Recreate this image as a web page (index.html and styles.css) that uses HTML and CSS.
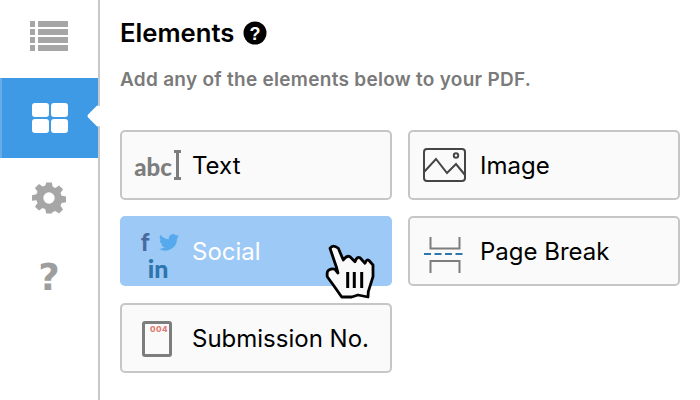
FILE: index.html
```html
<!DOCTYPE html>
<html lang="en">
<head>
<meta charset="UTF-8">
<title>Elements</title>
<link rel="stylesheet" href="styles.css">
</head>
<body>
<div class="app">
    <nav class="sidebar">
        <div class="nav-item nav-first">
            <svg width="38" height="30" viewBox="0 0 38 30" fill="#a6a6a6">
                <rect x="0" y="0" width="5" height="6"/><rect x="8" y="0" width="30" height="6"/>
                <rect x="0" y="8" width="5" height="6"/><rect x="8" y="8" width="30" height="6"/>
                <rect x="0" y="16" width="5" height="6"/><rect x="8" y="16" width="30" height="6"/>
                <rect x="0" y="24" width="5" height="6"/><rect x="8" y="24" width="30" height="6"/>
            </svg>
        </div>
        <div class="nav-item active">
            <svg width="36" height="30" viewBox="0 0 36 30" fill="#fff">
                <rect x="0" y="0" width="17" height="14" rx="3"/><rect x="19" y="0" width="17" height="14" rx="3"/>
                <rect x="0" y="16" width="17" height="14" rx="3"/><rect x="19" y="16" width="17" height="14" rx="3"/>
            </svg>
        </div>
        <div class="nav-item">
            <svg width="34" height="34" viewBox="0 0 24 24" fill="#a6a6a6">
                <path fill-rule="evenodd" d="M10 1h4l.6 3.1 1.9.8 2.6-1.8 2.8 2.8-1.8 2.6.8 1.9 3.1.6v4l-3.1.6-.8 1.9 1.8 2.6-2.8 2.8-2.6-1.8-1.9.8L14 23h-4l-.6-3.1-1.9-.8-2.6 1.8-2.8-2.8 1.8-2.6-.8-1.9L0 14v-4l3.1-.6.8-1.9L2.1 4.9l2.8-2.8 2.6 1.8 1.9-.8zM12 8a4 4 0 1 0 0 8 4 4 0 0 0 0-8z"/>
            </svg>
        </div>
        <div class="nav-item">
            <span class="nav-help">?</span>
        </div>
    </nav>

    <main class="content">
        <h1 class="title">Elements
            <svg class="title-help" width="24" height="24" viewBox="0 0 24 24">
                <circle cx="12" cy="12" r="11.5" fill="#000"/>
                <text x="12" y="18.5" text-anchor="middle" class="title-help-mark">?</text>
            </svg>
        </h1>
        <p class="subtitle">Add any of the elements below to your PDF.</p>

        <div class="grid">
            <div class="card">
                <div class="card-icon icon-text">
                    <span class="abc">abc</span>
                    <svg width="9" height="30" viewBox="0 0 9 30" fill="none" stroke="#7d7d7d" stroke-width="3">
                        <path d="M1 1.500h7M4.500 1.500v27M1 28.500h7"/>
                    </svg>
                </div>
                <span class="card-label">Text</span>
            </div>
            <div class="card">
                <div class="card-icon">
                    <svg width="44" height="34" viewBox="0 0 44 34" fill="none" stroke="#454545" stroke-width="2">
                        <rect x="1" y="1" width="41" height="32" rx="3"/>
                        <circle cx="33" cy="7.500" r="2.200"/>
                        <path d="M1 24L13 11 24 25 33 16 42 27"/>
                    </svg>
                </div>
                <span class="card-label">Image</span>
            </div>
            <div class="card card-hover">
                <div class="card-icon social">
                    <span class="fb">f</span>
                    <svg class="bird" width="20" height="17" viewBox="0 0 24 20" fill="#55a9ec">
                        <path d="M24 2.4a10 10 0 0 1-2.8.8 5 5 0 0 0 2.200-2.700 10 10 0 0 1-3.100 1.200 4.900 4.900 0 0 0-8.400 4.500A14 14 0 0 1 1.700 1a4.900 4.900 0 0 0 1.500 6.600 4.900 4.900 0 0 1-2.200-.6 4.900 4.900 0 0 0 3.900 4.900 4.900 4.900 0 0 1-2.200.1 4.900 4.900 0 0 0 4.600 3.400A9.900 9.900 0 0 1 0 17.400 14 14 0 0 0 21.600 5a10 10 0 0 0 2.400-2.600z"/>
                    </svg>
                    <span class="in">in</span>
                </div>
                <span class="card-label">Social</span>
            </div>
            <div class="card">
                <div class="card-icon">
                    <svg class="break-icon" width="42" height="36" viewBox="0 0 42 36" fill="none" stroke="#7d7d7d" stroke-width="2">
                        <path d="M6.500 0V11.500H35.500V0"/>
                        <path d="M6.500 36V24H35.500V36"/>
                        <path d="M0 17h42" stroke="#2e77ad" stroke-dasharray="7 3.500"/>
                    </svg>
                </div>
                <span class="card-label">Page Break</span>
            </div>
            <div class="card">
                <div class="card-icon">
                    <div class="sheet"><span class="sheet-no">004</span></div>
                </div>
                <span class="card-label">Submission No.</span>
            </div>
        </div>
    </main>
</div>

<svg class="hand" width="50" height="56" viewBox="0 0 50 56">
    <path d="M5 5.300Q8 .8 13.300 5.300L18.300 17Q22 12 25 13.700L30 18.700Q32 13 35 14.700L40 20.300Q42 15.500 44 17.500L48 22V33.700L43.300 48.700 43 54 33 52 26.700 54H16.700L8.300 42 2.300 33.700Q1.500 28 4 27 7 25 10 26.300L13 30 11.700 25z" fill="#f9f9f9" stroke="#000" stroke-width="2.800" stroke-linejoin="round"/>
    <path d="M22.700 29v16M29.300 29v16M36.700 29v16" stroke="#000" stroke-width="3" fill="none"/>
</svg>
</body>
</html>
```

FILE: styles.css
```css
body {
    margin: 0;
    background-color: #fff;
    font-family: "Inter", sans-serif;
    color: #000;
    overflow: hidden;
}

.app {
    display: flex;
    height: 400px;
}

/* barra lateral */
.sidebar {
    width: 98px;
    border-right: 2px solid #c8c8c8;
    flex-shrink: 0;
}

.nav-item {
    position: relative;
    display: flex;
    align-items: center;
    justify-content: center;
    height: 80px;
}

.nav-first {
    height: 78px;
    padding-bottom: 6px;
    box-sizing: border-box;
}

.nav-item.active {
    background-color: #3f9ae5;
    border-left: 2px solid #66ade8;
    box-sizing: border-box;
}

.nav-item.active::after {
    content: "";
    position: absolute;
    top: 30px;
    right: -8px;
    width: 16px;
    height: 16px;
    background-color: #fff;
    transform: rotate(45deg);
    border-radius: 2px;
}

.nav-help {
    font-family: "DejaVu Sans", sans-serif;
    font-weight: bold;
    font-size: 37px;
    color: #9e9e9e;
    margin-bottom: 1px;
}

.content {
    flex: 1;
    padding: 0 20px;
}

.title {
    display: flex;
    align-items: center;
    gap: 9px;
    margin: 16px 0 0;
    font-size: 25.7px;
    font-weight: 600;
    line-height: 34px;
}

.title-help-mark {
    font-family: "Liberation Sans", sans-serif;
    font-weight: bold;
    font-size: 18px;
    fill: #fff;
}

.subtitle {
    margin: 18px 0 0;
    font-size: 19px;
    font-weight: 600;
    letter-spacing: 0.28px;
    line-height: 24px;
    color: #7a7a7a;
}

.grid {
    display: grid;
    grid-template-columns: 272px 272px;
    grid-auto-rows: 70px;
    column-gap: 16px;
    row-gap: 16.4px;
    margin-top: 38px;
}

.card {
    display: flex;
    align-items: center;
    box-sizing: border-box;
    border: 2px solid #c6c6c6;
    border-radius: 5px;
    background-color: #fafafa;
    font-size: 24px;
}

.card-label {
    margin-top: 1px;
}

.card-hover {
    border: none;
    background-color: #9cc9f5;
    color: #fff;
}

.card-icon {
    display: flex;
    align-items: center;
    justify-content: center;
    width: 70px;
    flex-shrink: 0;
}

.card-hover .card-icon {
    width: 72px;
}

.icon-text {
    padding-left: 2px;
    box-sizing: border-box;
}

.abc {
    font-family: "Lato", sans-serif;
    font-size: 24px;
    font-weight: 900;
    color: #7d7d7d;
    margin-right: 1px;
    margin-top: 3px;
}

.break-icon {
    margin-top: 7px;
}

.social {
    flex-wrap: wrap;
    column-gap: 10px;
    line-height: 26px;
    padding-left: 8px;
    margin-top: 8px;
    box-sizing: border-box;
}

.fb {
    font-family: "Lato", sans-serif;
    font-size: 24px;
    font-weight: 900;
    color: #4a6a9e;
}

.in {
    font-family: "Lato", sans-serif;
    width: 100%;
    box-sizing: border-box;
    padding-right: 4px;
    text-align: center;
    font-size: 25px;
    font-weight: 900;
    color: #2f75ad;
}

.sheet {
    box-sizing: border-box;
    width: 30px;
    height: 36px;
    padding-right: 1px;
    border: 3px solid #7d7d7d;
    border-radius: 3px;
    text-align: right;
    margin-top: 2px;
}

.sheet-no {
    display: block;
    font-size: 8px;
    font-weight: 800;
    line-height: 10px;
    letter-spacing: 0.5px;
    color: #e07a72;
}

/* cursor encima de la tarjeta */
.hand {
    position: absolute;
    left: 325px;
    top: 243px;
}
```
